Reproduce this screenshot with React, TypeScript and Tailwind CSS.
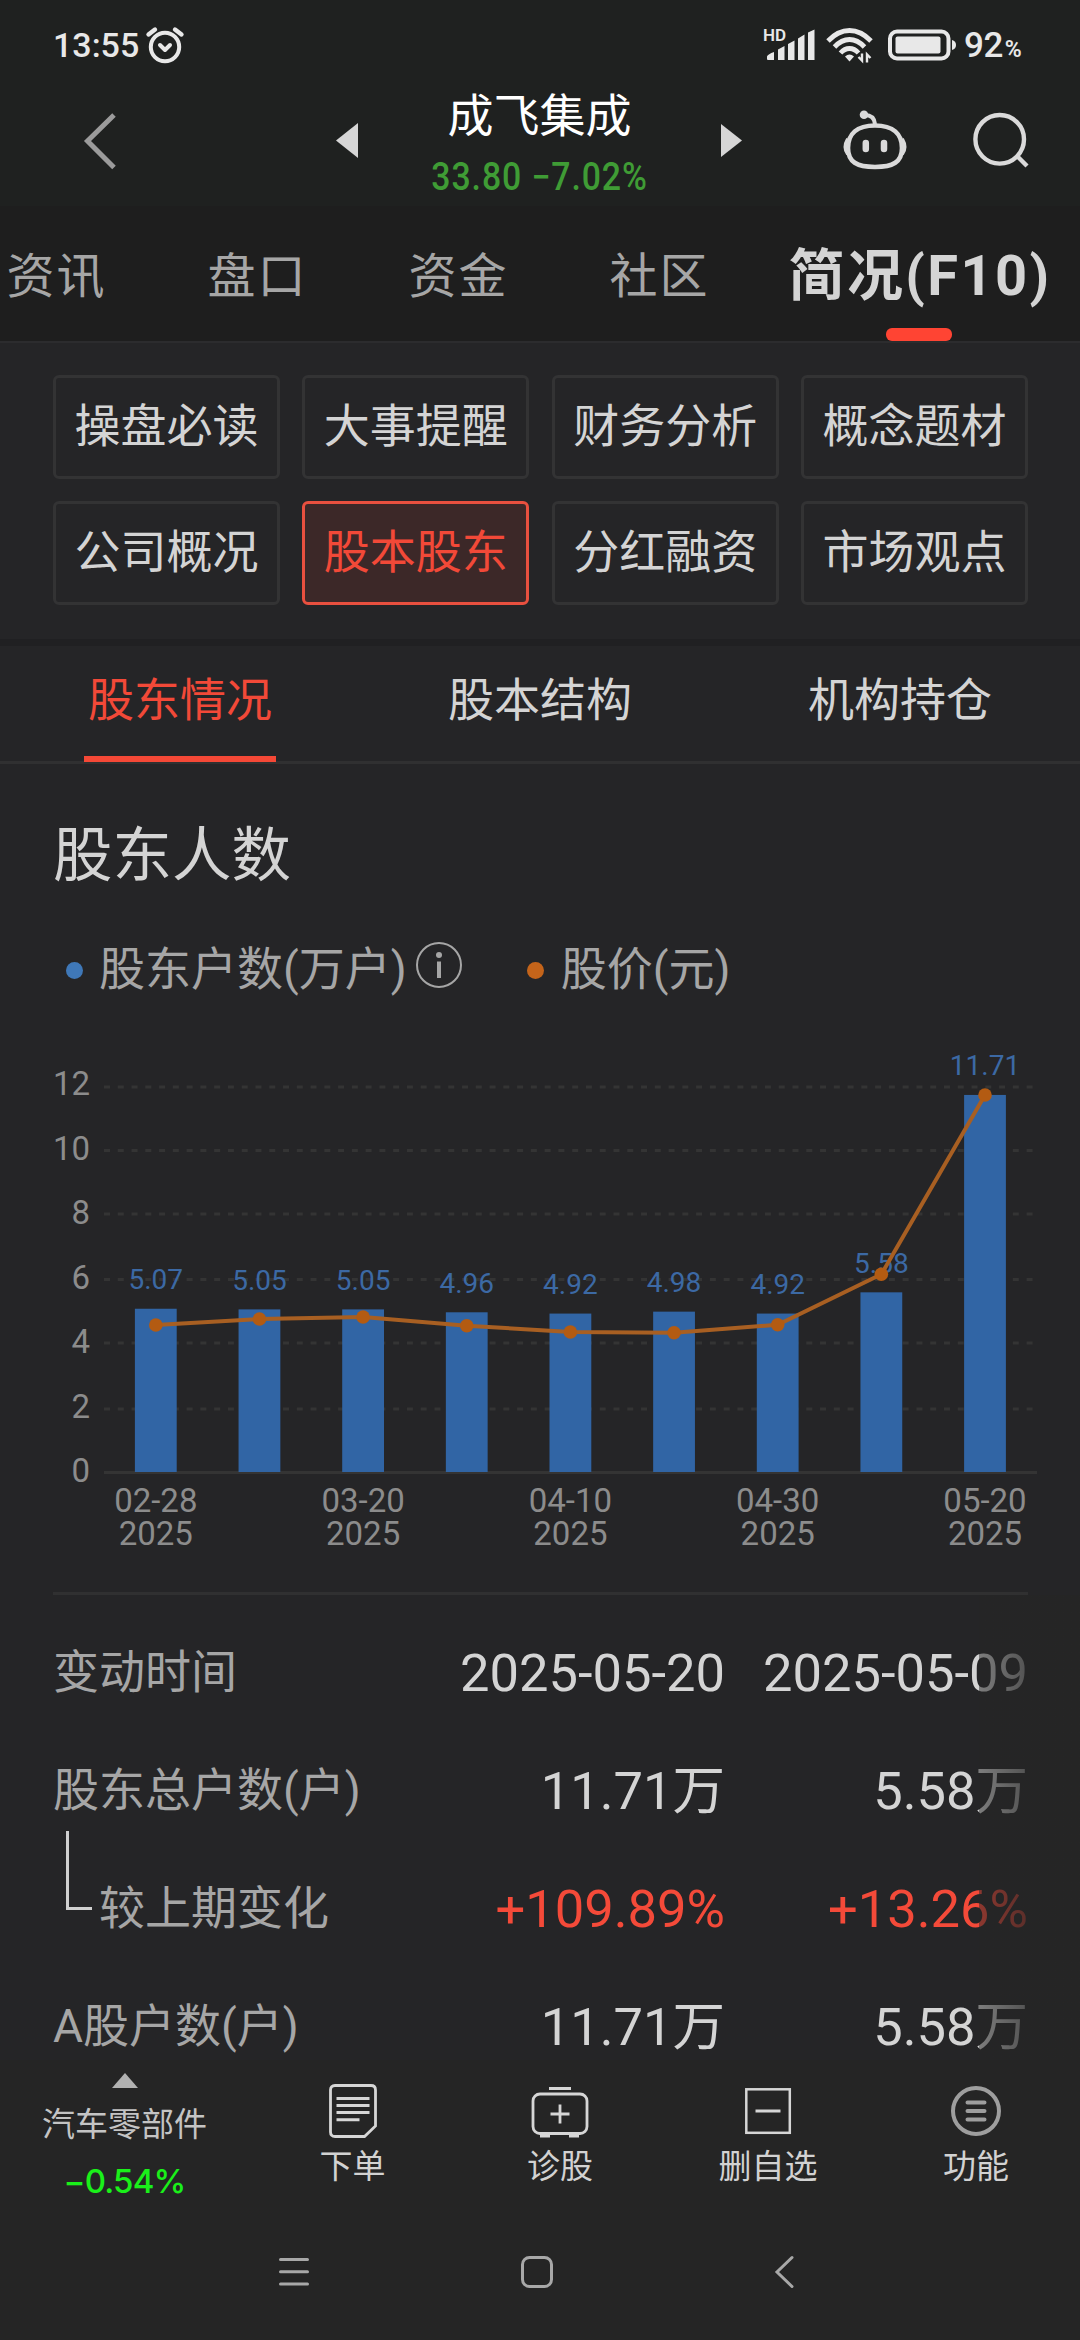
import React from 'react';

const mainTabs = ['资讯', '盘口', '资金', '社区'];

const sections = ['操盘必读', '大事提醒', '财务分析', '概念题材', '公司概况', '股本股东', '分红融资', '市场观点'];
const activeSection = '股本股东';

const subTabs = ['股东情况', '股本结构', '机构持仓'];

const holders = [
  { date: '02-28', value: 5.07, priceY: 265 },
  { date: '', value: 5.05, priceY: 259 },
  { date: '03-20', value: 5.05, priceY: 257 },
  { date: '', value: 4.96, priceY: 265.7 },
  { date: '04-10', value: 4.92, priceY: 272 },
  { date: '', value: 4.98, priceY: 272.8 },
  { date: '04-30', value: 4.92, priceY: 264.8 },
  { date: '', value: 5.58, priceY: 214.3 },
  { date: '05-20', value: 11.71, priceY: 35 },
];

const yTicks = [
  { label: '12', y: 27, textY: 35 },
  { label: '10', y: 90.5, textY: 99.5 },
  { label: '8', y: 154, textY: 164 },
  { label: '6', y: 219.5, textY: 228.5 },
  { label: '4', y: 283, textY: 293 },
  { label: '2', y: 349, textY: 357.5 },
  { label: '0', y: 412.5, textY: 422 },
];

const rows = [
  { label: '变动时间', values: ['2025-05-20', '2025-05-09'] },
  { label: '股东总户数(户)', values: ['11.71万', '5.58万'] },
  { label: '较上期变化', values: ['+109.89%', '+13.26%'], sub: true },
  { label: 'A股户数(户)', values: ['11.71万', '5.58万'] },
];

const StatusBar: React.FC = () => (
  <div className="flex h-[82px] items-center pt-[8px] text-[#e8e8e8]">
    <span className="ml-[53px] w-[91px] text-[34px] leading-none font-medium">13:55</span>
    <svg className="h-[40px] w-[42px]" viewBox="0 0 42 40" fill="none" stroke="currentColor" strokeLinecap="round">
      <circle cx="21" cy="22" r="14.2" strokeWidth="4" />
      <path d="M4.5 9.5 11 4.5M37.5 9.5 31 4.5" strokeWidth="4.4" />
      <path d="m16 20 5 5 5-5" strokeWidth="4" strokeLinejoin="round" />
    </svg>
    {/* Signal */}
    <svg className="ml-[577px] h-[40px] w-[56px]" viewBox="0 0 56 40" fill="currentColor">
      <text x="0" y="15.5" fontSize="17" fontWeight="600">HD</text>
      <path d="M4 31.5Q5 29 11 27V35H5Q4 35 4 34ZM15 24.5 21.5 21V35H15ZM25 19 31.5 15.5V35H25ZM35 13.5 41.5 9.500V35H35ZM45 7.500 51.500 4.500V35H45Z" />
    </svg>
    {/* Wifi */}
    <svg className="ml-[6px] h-[40px] w-[50px]" viewBox="0 0 50 40" fill="none" stroke="currentColor" strokeWidth="4.8">
      <path d="M3 16Q13 5.5 24.5 5.5T46 16" />
      <path d="M9.5 22Q16.5 14.5 24.5 14.5T39.5 22" />
      <path d="M15.5 28Q19.5 23.5 24.5 23.5T33.5 28" />
      <path d="m20 31.5 4.5 5 4.5-5q-4.5-4-9 0Z" fill="currentColor" stroke="none" />
      <path d="M37 28.5v7l-3.5-3.5M42 37.5v-8l3.5 3.5" strokeWidth="2.4" />
    </svg>
    {/* Battery */}
    <svg className="ml-[11px] h-[40px] w-[72px]" viewBox="0 0 72 40" fill="none">
      <rect x="4" y="6.5" width="58.5" height="27" rx="7" stroke="currentColor" strokeWidth="4" />
      <rect x="9.5" y="11.5" width="45" height="17" rx="2" fill="currentColor" />
      <path d="M66 15q4 1 4 5t-4 5Z" fill="currentColor" />
    </svg>
    <span className="ml-[6px] text-[35px] leading-none font-medium tracking-[-0.5px]">
      92<span className="ml-[2px] text-[23px] font-semibold">%</span>
    </span>
  </div>
);

const TitleBar: React.FC = () => (
  <div className="flex h-[124px] items-start">
    <svg className="mt-[29px] ml-[80px] h-[60px] w-[40px]" viewBox="0 0 40 60" fill="none">
      <path d="M34 4 7.5 30 34 56.5" stroke="#9b9b9b" strokeWidth="5" />
    </svg>
    <svg className="mt-[41px] ml-[216px] h-[35px] w-[22px]" viewBox="0 0 22 35">
      <path d="M22 0v35L0 17.5Z" fill="#d6d6d6" />
    </svg>
    <div className="flex w-[363px] flex-col items-center pt-[2px]">
      <h1 className="text-[46px] leading-[64px] font-normal text-white">成飞集成</h1>
      <p className="scale-x-[0.89] text-[38px] leading-[58px] font-medium tracking-[1px] whitespace-nowrap text-[#3f9c35]">33.80 −7.02%</p>
    </div>
    <svg className="mt-[42px] h-[33px] w-[21px]" viewBox="0 0 21 33">
      <path d="M0 0v33L21 16.5Z" fill="#d6d6d6" />
    </svg>
    {/* Assistant */}
    <svg className="mt-[24px] ml-[98px] h-[70px] w-[70px]" viewBox="0 0 70 70" fill="none" stroke="#dadada">
      <path d="M35 19.5C53 19.5 62 28 62 42S53 61 35 61 8 56 8 42 17 19.5 35 19.5Z" strokeWidth="4.6" />
      <path d="M25 9q9 0 10 9" strokeWidth="4" />
      <circle cx="24" cy="8.8" r="4.3" fill="#dadada" stroke="none" />
      <path d="M8 33q-5 8.5 0 15M62 33q5 8.5 0 15" strokeWidth="4" />
      <path d="M25.8 37v6M44 37v6" strokeWidth="6.5" strokeLinecap="round" />
    </svg>
    <svg className="mt-[28px] ml-[60px] h-[60px] w-[60px]" viewBox="0 0 60 60" fill="none" stroke="#dadada">
      <circle cx="29.7" cy="29.3" r="24.3" strokeWidth="4.4" />
      <path d="m47 46 10 10" strokeWidth="4.4" />
    </svg>
  </div>
);

const HolderChart: React.FC = () => {
  const x = (i: number) => 155.8 + i * 103.65;
  const barTop = (value: number) => 412 - value * 32.2;

  return (
    <svg className="block h-[532px] w-[1080px] overflow-visible" viewBox="0 0 1080 532">
      {yTicks.map((tick) => (
        <g key={tick.label}>
          <line
            x1="104"
            x2={tick.label === '0' ? 1037 : 1033}
            y1={tick.y}
            y2={tick.y}
            stroke="#343434"
            strokeWidth="2.8"
            strokeDasharray={tick.label === '0' ? undefined : '6 7.77'}
          />
          <text x="90" y={tick.textY} textAnchor="end" fontSize="33" fill="#8c8c8c">
            {tick.label}
          </text>
        </g>
      ))}
      {holders.map((item, i) => (
        <g key={i}>
          <rect x={x(i) - 20.9} y={barTop(item.value)} width="41.8" height={412 - barTop(item.value)} fill="#3165a5" />
          <text x={x(i)} y={barTop(item.value) - 19.5} textAnchor="middle" fontSize="28" fill="#3c69a4">
            {item.value.toFixed(2)}
          </text>
          {item.date && (
            <>
              <text x={x(i)} y="452" textAnchor="middle" fontSize="33" fill="#8c8c8c">{item.date}</text>
              <text x={x(i)} y="485" textAnchor="middle" fontSize="33" fill="#8c8c8c">2025</text>
            </>
          )}
        </g>
      ))}
      <polyline
        points={holders.map((item, i) => `${x(i)},${item.priceY}`).join(' ')}
        fill="none"
        stroke="#a85f22"
        strokeWidth="4"
      />
      {holders.map((item, i) => (
        <circle key={i} cx={x(i)} cy={item.priceY} r="6.8" fill="#b35b12" />
      ))}
    </svg>
  );
};

const HolderTable: React.FC = () => (
  <div className="relative flex h-[465px] flex-col pt-[19px]">
    {rows.map((row) => (
      <div key={row.label} className="flex h-[118px] shrink-0 items-center pl-[53px]">
        {row.sub ? (
          <div className="flex w-[400px] items-center pb-[3px] text-[46px] leading-[60px] text-[#a6a6a6]">
            <span className="mr-[7px] mb-[75px] ml-[13px] h-[79px] w-[26px] shrink-0 border-b-[3px] border-l-[3px] border-[#d0d0d0]" />
            {row.label}
          </div>
        ) : (
          <div className="w-[400px] pb-[3px] text-[46px] leading-[60px] text-[#a6a6a6]">{row.label}</div>
        )}
        {row.values.map((value, i) => (
          <div
            key={i}
            className={`text-right text-[52.5px] leading-[60px] whitespace-nowrap ${i === 0 ? 'w-[272px]' : 'w-[303px]'} ${
              row.sub ? 'text-[#f44a39]' : 'text-[#d4d4d4]'
            }`}
          >
            {value}
          </div>
        ))}
      </div>
    ))}
    {/* Fade over the scrolled-off column */}
    <div className="absolute top-0 right-0 h-full w-[101px] bg-linear-to-r from-[#252525]/50 to-[#252525]" />
  </div>
);

const BottomBar: React.FC = () => (
  <div className="flex h-[160px] text-[33px] leading-[40px] text-[#d2d2d2]">
    <div className="flex w-[249px] flex-col items-center pt-[13px]">
      <svg className="h-[15px] w-[26px]" viewBox="0 0 26 15">
        <path d="M13 0 26 15H0Z" fill="#b1b1b1" />
      </svg>
      <span className="mt-[17px] text-[#c4c4c4]">汽车零部件</span>
      <span className="mt-[16px] font-['Inter','Roboto',sans-serif] font-medium tracking-[-0.8px] text-[#1af01a]">−0.54%</span>
    </div>
    <div className="flex w-[207px] flex-col items-center pt-[23px]">
      <svg className="h-[56px] w-[50px]" viewBox="0 0 50 56" fill="none" stroke="#d6d6d6" strokeWidth="2.8">
        <path d="M7 2.5H43Q47.5 2.5 47.5 7V43L36.5 53.5H7Q2.5 53.5 2.5 49V7Q2.5 2.5 7 2.5Z" />
        <path d="M8.5 15.5h33M8.5 22.5h33M8.5 29.5h33M8.5 36.7h23" strokeWidth="3" />
      </svg>
      <span className="mt-[8px]">下单</span>
    </div>
    <div className="flex w-[208px] flex-col items-center pt-[23px]">
      <svg className="h-[56px] w-[58px]" viewBox="0 0 58 56" fill="none" stroke="#d6d6d6" strokeWidth="2.8">
        <rect x="2" y="11" width="54" height="39.5" rx="7" />
        <path d="M18 5.5h22M29 21.5v19M19.5 31h19" />
        <path d="M9 52.5h10M38 52.5h10" strokeWidth="4" />
      </svg>
      <span className="mt-[8px]">诊股</span>
    </div>
    <div className="flex w-[208px] flex-col items-center pt-[23px]">
      <svg className="h-[56px] w-[48px]" viewBox="0 0 48 56" fill="none" stroke="#d6d6d6" strokeWidth="2.5">
        <rect x="2.3" y="6.3" width="43.5" height="43.5" />
        <path d="M11.5 28h25" strokeWidth="3" />
      </svg>
      <span className="mt-[8px]">删自选</span>
    </div>
    <div className="flex w-[208px] flex-col items-center pt-[23px]">
      <svg className="h-[56px] w-[52px]" viewBox="0 0 52 56" fill="none" stroke="#9e9e9e" strokeWidth="4">
        <circle cx="26" cy="28" r="23" />
        <path d="M17.5 19.5h17M17.5 28h17M17.5 36.5h17" strokeLinecap="round" />
      </svg>
      <span className="mt-[8px]">功能</span>
    </div>
  </div>
);

const SystemNav: React.FC = () => (
  <div className="flex h-[120px] pt-[34px] text-[#a8a8a8]">
    <svg className="ml-[275px] h-[36px] w-[38px]" viewBox="0 0 38 36" stroke="currentColor" strokeWidth="3" strokeLinecap="round">
      <path d="M5.5 5.5h27M5.5 17.8h27M5.5 30h27" />
    </svg>
    <svg className="ml-[206px] h-[36px] w-[36px]" viewBox="0 0 36 36" fill="none" stroke="currentColor" strokeWidth="3">
      <rect x="3.5" y="3.5" width="29" height="29" rx="7" />
    </svg>
    <svg className="ml-[217px] h-[36px] w-[26px]" viewBox="0 0 26 36" fill="none" stroke="currentColor" strokeWidth="3" strokeLinecap="round">
      <path d="M20 3.5 5 18l15 14.5" />
    </svg>
  </div>
);

export default function App() {
  return (
    <div className="flex h-[2340px] w-[1080px] flex-col overflow-hidden bg-[#252527] font-['Roboto','Noto_Sans_CJK_SC',sans-serif]">
      <header className="h-[206px] shrink-0 bg-[#1f2120]">
        <StatusBar />
        <TitleBar />
      </header>

      {/* Main tabs */}
      <nav className="flex h-[137px] shrink-0 overflow-hidden border-b-2 border-[#2c2c2e] bg-[#1e1e1e]">
        {mainTabs.map((tab, i) => (
          <div
            key={tab}
            className={`w-[201px] shrink-0 text-center text-[48px] leading-[141px] tracking-[2px] text-[#a6a6a6] ${i === 0 ? 'ml-[-44px]' : ''}`}
          >
            {tab}
          </div>
        ))}
        <div className="relative flex-1 text-center text-[56px] leading-[140px] font-bold tracking-[2.4px] whitespace-nowrap text-[#d4d4d4]">
          简况(F10)
          <span className="absolute bottom-0 left-[126px] h-[13px] w-[66px] rounded-[6px] bg-[#ff4433]" />
        </div>
      </nav>

      {/* Section grid */}
      <div className="grid h-[296px] shrink-0 grid-cols-4 content-start gap-x-[22.5px] gap-y-[22px] pt-[32px] pr-[52px] pl-[53px]">
        {sections.map((name) => (
          <button
            key={name}
            className={`h-[104px] rounded-[6px] border-[3px] pb-[2px] text-[46px] leading-[60px] ${
              name === activeSection
                ? 'border-[#e9503f] bg-[#3c2828] text-[#f24938]'
                : 'border-[#333334] text-[#d4d4d4]'
            }`}
          >
            {name}
          </button>
        ))}
      </div>
      <div className="h-[7px] shrink-0 bg-[#202022]" />

      {/* Sub tabs */}
      <div className="flex h-[118px] shrink-0 border-b-[3px] border-[#303031]">
        {subTabs.map((tab, i) => (
          <div
            key={tab}
            className={`relative w-[360px] text-center text-[46px] leading-[108px] ${i === 0 ? 'text-[#f24938]' : 'text-[#d4d4d4]'}`}
          >
            {tab}
            {i === 0 && <span className="absolute bottom-[-1px] left-[84px] h-[6px] w-[192px] bg-[#f54836]" />}
          </div>
        ))}
      </div>

      <h2 className="mt-[56px] h-[70px] shrink-0 pl-[53px] text-[59.5px] leading-[72px] font-normal text-[#d4d4d4]">股东人数</h2>

      {/* Legend */}
      <div className="mt-[50px] flex h-[60px] shrink-0 items-center text-[46px] leading-[60px] text-[#a6a6a6]">
        <span className="ml-[66px] h-[17px] w-[17px] rounded-full bg-[#3f78b8]" />
        <span className="ml-[16px] pb-[3px]">股东户数(万户)</span>
        <svg className="mb-[11px] ml-[8px] h-[48px] w-[48px]" viewBox="0 0 48 48" fill="none" stroke="currentColor">
          <circle cx="24" cy="24" r="22" strokeWidth="2" />
          <circle cx="24" cy="14" r="3" fill="currentColor" stroke="none" />
          <path d="M24 20.5v16.5" strokeWidth="4" />
        </svg>
        <span className="ml-[64px] h-[17px] w-[17px] rounded-full bg-[#c4641a]" />
        <span className="ml-[17px] pb-[3px]">股价(元)</span>
      </div>

      <div className="mt-[60px] h-[532px] shrink-0">
        <HolderChart />
      </div>
      <div className="mr-[52px] ml-[53px] h-[3px] shrink-0 bg-[#303031]" />

      <HolderTable />

      <footer className="h-[280px] shrink-0 bg-[#252525]">
        <BottomBar />
        <SystemNav />
      </footer>
    </div>
  );
}
